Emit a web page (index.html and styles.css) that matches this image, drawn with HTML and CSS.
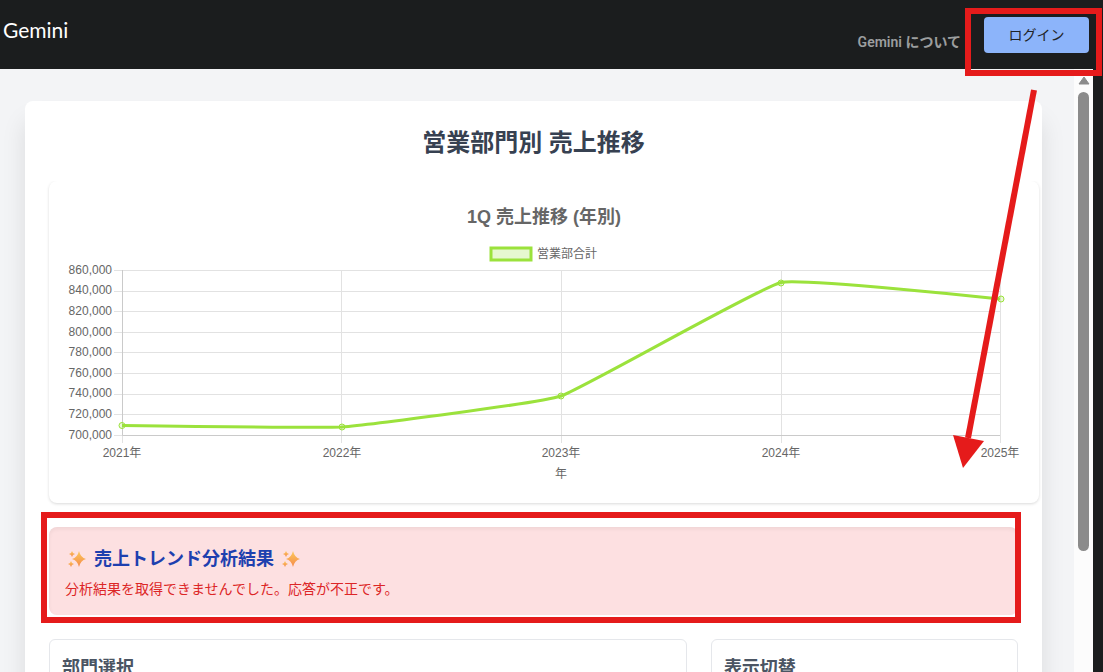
FILE: index.html
```html
<!DOCTYPE html>
<html lang="ja">
<head>
  <meta charset="UTF-8">
  <title>営業部門別 売上推移</title>
  <link rel="stylesheet" href="styles.css">
</head>
<body>
  <header class="site-header">
    <a class="logo" href="#">Gemini</a>
    <nav class="site-nav">
      <a class="about-link" href="#">Gemini について</a>
      <div class="login-box">
        <button type="button" class="login-button">ログイン</button>
        <span class="mark mark-login"></span>
      </div>
    </nav>
  </header>

  <div class="viewer">
    <main class="content">
      <div class="card">
        <h1>営業部門別 売上推移</h1>

        <section class="chart-card">
          <svg class="chart" viewBox="0 0 990 322" role="img" aria-label="1Q 売上推移 (年別)">
            <text class="chart-title" x="495" y="42">1Q 売上推移 (年別)</text>
            <rect class="legend-box" x="442" y="67" width="40" height="12" />
            <text class="legend-text" x="488" y="77">営業部合計</text>

            <!-- grid lines -->
            <g class="grid">
              <path d="M65 89.5H951M65 110.5H951M65 130.5H951M65 151.5H951M65 171.5H951M65 192.5H951M65 213.5H951M65 233.5H951" />
              <path d="M292.5 89V262M512.5 89V262M732.5 89V262M951.5 89V262M73.5 254V262M65 254.5H73" />
              <path class="axis" d="M73.5 89V254.5H951" />
            </g>

            <g class="y-labels">
              <text x="63" y="93">860,000</text>
              <text x="63" y="113">840,000</text>
              <text x="63" y="134">820,000</text>
              <text x="63" y="155">800,000</text>
              <text x="63" y="175">780,000</text>
              <text x="63" y="196">760,000</text>
              <text x="63" y="216">740,000</text>
              <text x="63" y="237">720,000</text>
              <text x="63" y="258">700,000</text>
            </g>
            <g class="x-labels">
              <text x="73" y="276">2021年</text>
              <text x="293" y="276">2022年</text>
              <text x="512" y="276">2023年</text>
              <text x="732" y="276">2024年</text>
              <text x="951" y="276">2025年</text>
              <text x="512" y="297">年</text>
            </g>

            <!-- sales line -->
            <path class="line" d="M73 244.5C73 244.5 271 247 293 246C315 244.5 491 222 512 215C535 207 709 107 732 101.5C753 97 951 118 951 118" />
            <g class="points">
              <circle cx="73" cy="244.5" r="3" />
              <circle cx="293" cy="246" r="3" />
              <circle cx="512" cy="215" r="3" />
              <circle cx="732" cy="102" r="3" />
              <circle cx="952" cy="118" r="3" />
            </g>
          </svg>
        </section>

        <section class="analysis">
          <h2>
            <svg class="sparkle" viewBox="0 0 18 18" aria-hidden="true">
              <defs>
                <linearGradient id="spark" x1="0" y1="0" x2="0" y2="1">
                  <stop offset="0" stop-color="#fcc95a" />
                  <stop offset="1" stop-color="#f58a4b" />
                </linearGradient>
              </defs>
              <path d="M11 1Q12.5 7.500 18 9Q12.5 10.500 11 17Q9.500 10.500 4 9Q9.500 7.500 11 1Z" />
              <path d="M4 1Q4.500 3.500 7 4Q4.500 4.500 4 7Q3.500 4.500 1 4Q3.500 3.500 4 1Z" />
              <path d="M3 11Q3.500 13.500 6 14Q3.500 14.500 3 17Q2.500 14.500 0 14Q2.500 13.500 3 11Z" />
            </svg>
            売上トレンド分析結果
            <svg class="sparkle" viewBox="0 0 18 18" aria-hidden="true">
              <path d="M11 1Q12.5 7.500 18 9Q12.5 10.500 11 17Q9.500 10.500 4 9Q9.500 7.500 11 1Z" />
              <path d="M4 1Q4.500 3.500 7 4Q4.500 4.500 4 7Q3.500 4.500 1 4Q3.500 3.500 4 1Z" />
              <path d="M3 11Q3.500 13.500 6 14Q3.500 14.500 3 17Q2.500 14.500 0 14Q2.500 13.500 3 11Z" />
            </svg>
          </h2>
          <p>分析結果を取得できませんでした。応答が不正です。</p>
          <span class="mark mark-analysis"></span>
        </section>

        <div class="panels">
          <section class="panel">
            <h3>部門選択</h3>
          </section>
          <section class="panel">
            <h3>表示切替</h3>
          </section>
        </div>
      </div>
    </main>

    <div class="scrollbar">
      <svg class="scroll-up" viewBox="0 0 12 9" aria-hidden="true">
        <path d="M6 1L11 8H1Z" />
      </svg>
      <div class="scroll-thumb"></div>
    </div>

    <!-- arrow from the login button to the error -->
    <svg class="arrow" viewBox="0 0 90 385" aria-hidden="true">
      <path class="arrow-line" d="M84 5L18 353" />
      <path class="arrow-head" d="M3 350L34 356L13 383Z" />
    </svg>
  </div>
</body>
</html>
```
FILE: styles.css
```css
* {
  box-sizing: border-box;
}

body {
  margin: 0;
  height: 100vh;
  display: flex;
  flex-direction: column;
  overflow: hidden;
  background-color: #1b1d1e;
  font-family: "Liberation Sans", "Noto Sans CJK JP", sans-serif;
}

h1,
h2,
h3,
p {
  margin: 0;
}

/* Header */
.site-header {
  display: flex;
  justify-content: space-between;
  align-items: flex-start;
  padding: 17px 14px 16px 3px;
}

.logo {
  color: #fff;
  font-family: Lato, sans-serif;
  font-size: 21px;
  line-height: 26px;
  text-decoration: none;
}

.site-nav {
  display: flex;
  align-items: flex-start;
  gap: 23px;
}

.about-link {
  padding-top: 15px;
  color: #9c9e9f;
  font-family: Roboto, "Noto Sans CJK JP", sans-serif;
  font-size: 14px;
  font-weight: 600;
  line-height: 20px;
  text-decoration: none;
}

.login-box {
  position: relative;
}

.login-button {
  display: block;
  min-width: 105px;
  height: 36px;
  padding: 0 24px 2px;
  border: none;
  border-radius: 4px;
  background-color: #8cb4fa;
  color: #1f2326;
  font-family: Roboto, "Noto Sans CJK JP", sans-serif;
  font-size: 14px;
  font-weight: 400;
  cursor: pointer;
}

/* Red frames */
.mark {
  position: absolute;
  z-index: 2;
  border: 6px solid #e51b1b;
  pointer-events: none;
}

.mark-login {
  inset: -9px -13px -23px -19px;
}

.mark-analysis {
  inset: -15px -3px -8px -8px;
}

/* Viewer */
.viewer {
  position: relative;
  flex: 1;
  min-height: 0;
  display: flex;
  margin-right: 10px;
  background-color: #f3f4f6;
}

.content {
  flex: 1;
  min-width: 0;
  padding: 32px 32px 32px 25px;
  overflow: hidden;
}

.card {
  padding: 24px;
  border-radius: 8px;
  background-color: #fff;
  box-shadow: 0 20px 25px rgba(0, 0, 0, 0.1);
}

h1 {
  margin-bottom: 20px;
  color: #374151;
  font-size: 24px;
  line-height: 36px;
  text-align: center;
}

/* Chart */
.chart-card {
  margin: 0 -21px 24px 0;
  border-radius: 8px;
  box-shadow: 0 1px 3px rgba(0, 0, 0, 0.15);
  clip-path: inset(0 -4px -4px -4px);
}

.chart {
  display: block;
  width: 100%;
  fill: #666;
  font-size: 12px;
}

.chart-title {
  font-size: 18px;
  font-weight: bold;
  text-anchor: middle;
}

.legend-box {
  fill: #e6f8d0;
  stroke: #9be23c;
  stroke-width: 3;
}

.grid {
  fill: none;
  stroke: #e2e2e2;
}

.axis {
  stroke: #cacaca;
}

.y-labels {
  text-anchor: end;
}

.x-labels {
  text-anchor: middle;
}

.line {
  fill: none;
  stroke: #9be23c;
  stroke-width: 3;
}

.points {
  fill: rgba(155, 226, 60, 0.2);
  stroke: #9be23c;
}

/* Analysis result */
.analysis {
  position: relative;
  margin-bottom: 24px;
  padding: 16px;
  border-radius: 8px;
  background-color: #fde0e1;
  box-shadow: inset 0 2px 4px rgba(0, 0, 0, 0.06);
}

.analysis h2 {
  display: flex;
  align-items: center;
  gap: 8px;
  margin-bottom: 4px;
  padding-left: 3px;
  color: #1e40af;
  font-size: 18px;
  line-height: 32px;
}

.sparkle {
  width: 18px;
  height: 18px;
  fill: url(#spark);
}

.analysis p {
  color: #dc2626;
  font-size: 14px;
  line-height: 20px;
}

/* Bottom panels */
.panels {
  display: grid;
  grid-template-columns: 27fr 13fr;
  gap: 24px;
}

.panel {
  min-height: 120px;
  padding: 12px;
  border: 1px solid #e5e7eb;
  border-radius: 6px;
}

.panel h3 {
  color: #4b5563;
  font-size: 18px;
  line-height: 32px;
}

/* Scrollbar */
.scrollbar {
  display: flex;
  flex-direction: column;
  align-items: center;
  gap: 7px;
  width: 19px;
  padding-top: 7px;
  background-color: #fcfcfc;
}

.scroll-up {
  width: 12px;
  height: 9px;
  fill: #8b8b8b;
  stroke: #8b8b8b;
  stroke-linejoin: round;
}

.scroll-thumb {
  width: 11px;
  height: 77%;
  border-radius: 6px;
  background-color: #8b8b8b;
}

/* Arrow */
.arrow {
  position: absolute;
  top: 16px;
  right: 53px;
  width: 90px;
  height: 385px;
  pointer-events: none;
}

.arrow-line {
  stroke: #e51b1b;
  stroke-width: 6;
}

.arrow-head {
  fill: #e51b1b;
}
```
